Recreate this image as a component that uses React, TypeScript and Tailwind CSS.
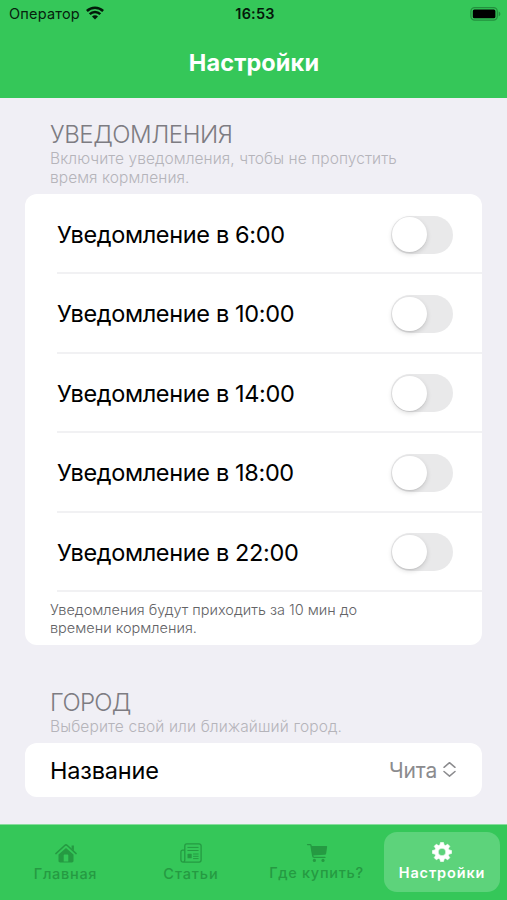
const times = ["6:00", "10:00", "14:00", "18:00", "22:00"];

function Toggle() {
  return (
    <div className="mr-[29px] flex h-[38px] w-[62.5px] items-center rounded-full bg-[#e9e9ea] p-[1.5px]">
      <div className="size-[34.5px] rounded-full bg-white shadow-[0_2px_5px_rgba(0,0,0,0.14),0_1px_1px_rgba(0,0,0,0.06)]" />
    </div>
  );
}

function WifiIcon() {
  return (
    <svg className="h-[14px] w-[18px] -translate-y-px" viewBox="0 0 18 14" fill="none" stroke="#031a09" strokeWidth="2.5">
      <path d="M.9 5A11.6 11.6 0 0 1 17.1 5" />
      <path d="M3.7 8.2a7.5 7.5 0 0 1 10.6 0" />
      <path d="M6 10.6a4.2 4.2 0 0 1 6 0L9 13.6Z" fill="#031a09" stroke="none" />
    </svg>
  );
}

function BatteryIcon() {
  return (
    <svg className="h-[14px] w-[31px]" viewBox="0 0 31 14">
      <rect x=".9" y=".7" width="26.4" height="12.4" rx="3.8" fill="none" stroke="#23903e" strokeWidth="1.3" />
      <rect x="2.8" y="2.5" width="22.6" height="8.8" rx="1.6" fill="#000" />
      <path d="M28.7 4.5c2.2.7 2.2 4.1 0 4.8Z" fill="#23903e" />
    </svg>
  );
}

function HouseIcon() {
  return (
    <svg className="h-[20px] w-[22px]" viewBox="0 0 22 20" fill="currentColor">
      <path d="M.9 10.6 9.7 2.5a1.9 1.9 0 0 1 2.6 0l8.8 8.1" fill="none" stroke="currentColor" strokeWidth="1.5" strokeLinecap="round" />
      <path d="M16.6 2.6h2.3v5.3l-2.3-2.1Z" />
      <path fillRule="evenodd" d="M11 4.9 3.5 11.6v6.2c0 1 .6 1.6 1.6 1.6h11.8c1 0 1.6-.6 1.6-1.6v-6.2ZM8.7 18.4v-6.2c0-.4.3-.7.7-.7h3.2c.4 0 .7.3.7.7v6.2Z" />
    </svg>
  );
}

function NewspaperIcon() {
  return (
    <svg className="h-[20px] w-[22px]" viewBox="0 0 22 20" fill="none" stroke="currentColor" strokeWidth="1.3">
      <path d="M4.8 7.2H2.6c-1 0-1.7.7-1.7 1.7v7.7c0 1.5.9 2.5 2.2 2.5h16c1.2 0 2-.8 2-2V2.9c0-1.2-.8-2-2-2H6.8c-1.2 0-2 .8-2 2v13.8c0 1.4-.7 2.4-1.8 2.4" />
      <path d="M7.8 4.4h10.4M7.8 7.5h10.4M13.5 11h4.7M13.5 13.3h4.7M13.5 15.6h4.7" strokeWidth="1" strokeLinecap="round" />
      <rect x="7.5" y="10.8" width="4.2" height="4.5" rx=".6" fill="currentColor" stroke="none" />
    </svg>
  );
}

function CartIcon() {
  return (
    <svg className="h-[20px] w-[22px]" viewBox="0 0 22 20" fill="currentColor">
      <path d="M1.6 1.6H4c.6 0 .9.3 1 .9l1.8 10.7c.1.8.6 1.2 1.3 1.2h10.8" fill="none" stroke="currentColor" strokeWidth="1.4" strokeLinecap="round" />
      <path d="M4.9 3.1h15.4c.6 0 .9.4.8 1l-.9 6.2c-.2 1-.7 1.5-1.7 1.5l-12 .8Z" />
      <circle cx="8.4" cy="17.4" r="1.6" />
      <circle cx="17" cy="17.4" r="1.6" />
    </svg>
  );
}

function GearIcon() {
  return (
    <svg className="h-[20px] w-[20px]" viewBox="-10 -10 20 20" fill="currentColor">
      <path fillRule="evenodd" d="M-1.5-9.5h3l.6 2.5 1.4.6 2.2-1.4L7.8-5.7 6.4-3.5 7-2.1l2.5.6v3L7 2.1l-.6 1.4 1.4 2.2-2.1 2.1-2.2-1.4-1.4.6-.6 2.5h-3L-2.1 7l-1.4-.6-2.2 1.4-2.1-2.1 1.4-2.2L-7 2.1l-2.5-.6v-3l2.5-.6.6-1.4-1.4-2.2 2.1-2.1 2.2 1.4 1.4-.6ZM3.8 0A3.8 3.8 0 1 0-3.8 0 3.8 3.8 0 1 0 3.8 0Z" stroke="currentColor" strokeWidth=".6" strokeLinejoin="round" />
    </svg>
  );
}

export default function App() {
  return (
    <div className="flex h-[900px] w-[507px] flex-col overflow-hidden bg-[#f0eff5] font-['Inter','Liberation_Sans',sans-serif] whitespace-nowrap">
      <header className="h-[98.4px] shrink-0 bg-[#35c759]">
        <div className="grid h-[27px] grid-cols-3 items-center pr-[6px] pl-[9px]">
          <div className="flex items-center gap-[6px] text-[14.5px] text-[#06220d]">
            <span className="tracking-[0.2px]">Оператор</span>
            <WifiIcon />
          </div>
          <div className="text-center text-[14.5px] font-semibold tracking-[0.2px] text-[#04180a]">16:53</div>
          <div className="flex justify-end">
            <BatteryIcon />
          </div>
        </div>
        <h1 className="mt-[21px] pl-[1px] text-center text-[23.5px] leading-[30px] font-bold tracking-[0.1px] text-white">Настройки</h1>
      </header>

      <main className="flex h-[725.6px] shrink-0 flex-col px-[25px] pt-[21.6px]">
        <div className="px-[25px]">
          <h2 className="text-[24px] leading-[30px] font-light tracking-[-0.45px] text-[#7d7c82]">УВЕДОМЛЕНИЯ</h2>
          <p className="-mt-px text-[15.5px] leading-[19px] font-light tracking-[0.07px] text-[#b5b4ba]">
            Включите уведомления, чтобы не пропустить
            <br />
            время кормления.
          </p>
        </div>
        <section className="mt-[7.4px] h-[450.6px] shrink-0 rounded-[12px] bg-white pt-[0.6px]">
          {times.map((time) => (
            <div key={time} className="ml-[32px] flex h-[79.4px] items-center justify-between border-b-2 border-[#f1f1f3] pt-[2px]">
              <span className="text-[23.5px] tracking-[-0.35px] text-black">Уведомление в {time}</span>
              <Toggle />
            </div>
          ))}
          <p className="pt-[9.4px] pl-[25px] text-[14.5px] leading-[18px] font-light text-[#636366]">
            Уведомления будут приходить за 10 мин до
            <br />
            времени кормления.
          </p>
        </section>
        <div className="mt-[43.4px] px-[25px]">
          <h2 className="text-[24px] leading-[30px] font-light tracking-[-0.7px] text-[#7d7c82]">ГОРОД</h2>
          <p className="-mt-px text-[15.5px] leading-[19px] font-light tracking-[0.12px] text-[#b5b4ba]">Выберите свой или ближайший город.</p>
        </div>
        <section className="mt-[6.4px] flex h-[54px] shrink-0 items-center justify-between rounded-[12px] bg-white pt-[1px] pr-[26px] pl-[25px]">
          <span className="text-[23.5px] tracking-[-0.2px] text-black">Название</span>
          <div className="flex items-center gap-[6px] text-[#8b8b8e]">
            <span className="text-[21px] tracking-[-0.2px]">Чита</span>
            <svg className="h-[16px] w-[13px] -translate-y-[0.5px]" viewBox="0 0 13 16" fill="none" stroke="currentColor" strokeWidth="1.5" strokeLinecap="round" strokeLinejoin="round">
              <path d="M1 5.8 6.5 1.2 12 5.8M1 10l5.5 4.6L12 10" />
            </svg>
          </div>
        </section>
      </main>

      <nav className="flex h-[76px] shrink-0 border-t border-[#88dc9d] bg-[#35c759] pt-[7px] pl-[3px] text-[14.5px] leading-[18px] font-medium tracking-[0.7px] text-[#259a42]">
        <div className="flex w-[125px] flex-col items-center pt-[11px]">
          <HouseIcon />
          <span className="mt-[2px]">Главная</span>
        </div>
        <div className="flex w-[126px] flex-col items-center pt-[11px]">
          <NewspaperIcon />
          <span className="mt-[2px] tracking-[0.9px]">Статьи</span>
        </div>
        <div className="flex w-[125px] flex-col items-center pt-[11px]">
          <CartIcon />
          <span className="mt-[1px]">Где купить?</span>
        </div>
        <div className="ml-[5px] flex h-[60px] w-[116px] flex-col items-center rounded-[13px] bg-[#5dd37b] pt-[10.5px] font-semibold text-white">
          <GearIcon />
          <span className="mt-[1.5px] tracking-[0.85px]">Настройки</span>
        </div>
      </nav>
    </div>
  );
}
